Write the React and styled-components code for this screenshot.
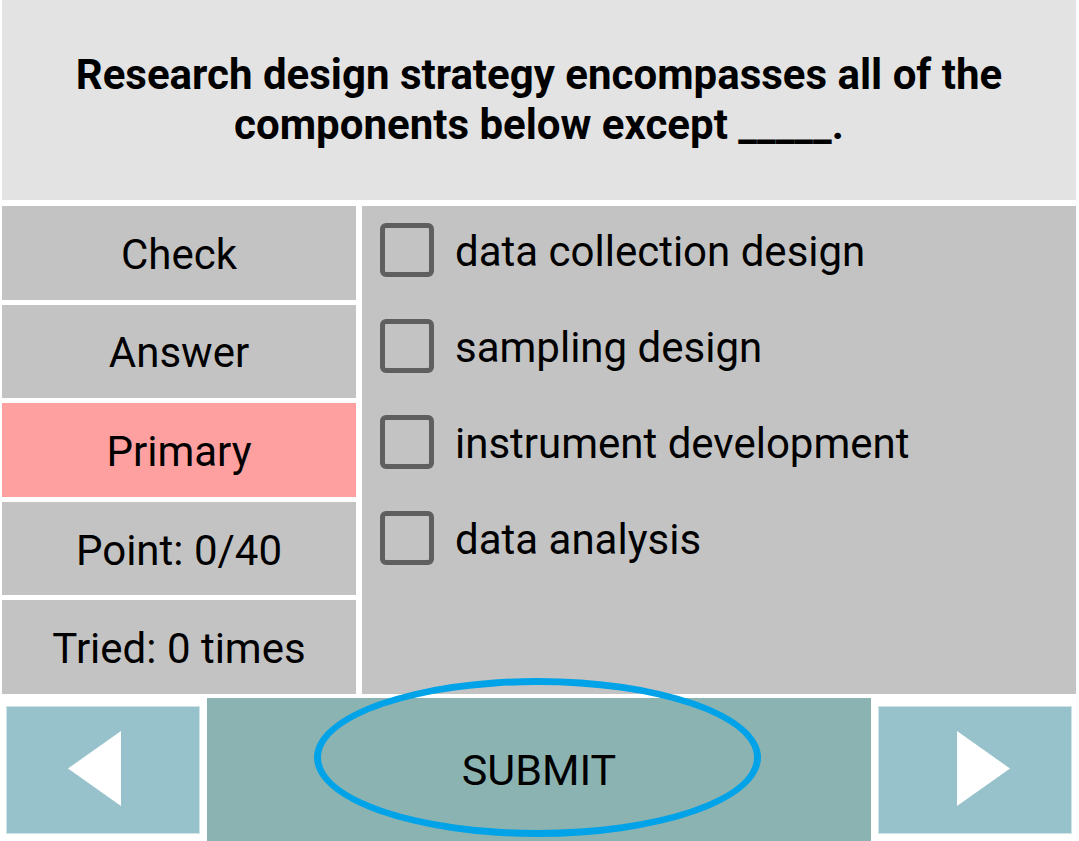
import React from "react";
import styled, { createGlobalStyle } from "styled-components";

const GlobalStyle = createGlobalStyle`
  html, body {
    margin: 0;
    padding: 0;
    background: #ffffff;
    overflow: hidden;
  }
  body {
    font-family: Roboto, "Liberation Sans", Arial, sans-serif;
    color: #000;
  }
`;

const Page = styled.div`
  width: 1079px;
  box-sizing: border-box;
  padding: 0 3px 0 2px;
  display: flex;
  flex-direction: column;
`;

const Header = styled.div`
  height: 200px;
  background: #e3e3e3;
  display: flex;
  align-items: center;
  justify-content: center;
  text-align: center;
`;

const Question = styled.h1`
  margin: 0;
  font-size: 42px;
  font-weight: 700;
  line-height: 50px;
  padding: 0 20px;
`;

const Middle = styled.div`
  margin-top: 6px;
  height: 488px;
  display: flex;
  gap: 6px;
`;

const SideColumn = styled.div`
  width: 354px;
  display: flex;
  flex-direction: column;
  gap: 5px;
`;

const SideRow = styled.div`
  flex: 1;
  background: ${p => (p.$active ? "#ffa0a0" : "#c3c3c3")};
  display: flex;
  align-items: center;
  justify-content: center;
  padding-top: 3px;
  font-size: 42px;
`;

const Options = styled.div`
  flex: 1;
  background: #c3c3c3;
  padding: 6px 0 0 18px;
  display: flex;
  flex-direction: column;
  gap: 20px;
`;

const Option = styled.label`
  height: 76px;
  display: flex;
  align-items: center;
  gap: 21px;
  font-size: 42px;
  cursor: pointer;
`;

const OptionText = styled.span`
  padding-top: 3px;
`;

const Box = styled.span`
  width: 54px;
  height: 54px;
  box-sizing: border-box;
  border: 5px solid #5f5f5f;
  border-radius: 6px;
  flex-shrink: 0;
`;

const Bottom = styled.div`
  margin-top: 4px;
  display: flex;
  align-items: flex-start;
  gap: 7px;
  padding: 0 4px;
`;

const NavButton = styled.button`
  width: 194px;
  height: 128px;
  margin-top: 8px;
  border: 1px solid #cfe2e6;
  box-sizing: border-box;
  background: #98c2cb;
  display: flex;
  align-items: center;
  justify-content: center;
  padding: 0 0 4px;
  cursor: pointer;
`;

const SubmitButton = styled.button`
  position: relative;
  flex: 1;
  height: 144px;
  border: none;
  background: #8ab3b2;
  font-family: Roboto, "Liberation Sans", Arial, sans-serif;
  font-size: 43px;
  color: #000;
  padding: 0;
  cursor: pointer;
`;

const Ring = styled.span`
  position: absolute;
  left: 107px;
  top: -20px;
  width: 447px;
  height: 159px;
  box-sizing: border-box;
  border: 7px solid #00a3e8;
  border-radius: 50%;
  pointer-events: none;
`;

const options = [
  "data collection design",
  "sampling design",
  "instrument development",
  "data analysis"
];

const Arrow = ({ dir }) => (
  <svg width="106" height="75" viewBox="0 0 106 75">
    <polygon
      fill="#fff"
      points={dir === "left" ? "71,0 71,75 18,37.5" : "35,0 35,75 88,37.5"}
    />
  </svg>
);

const App = () => {
  return (
    <Page>
      <GlobalStyle />
      <Header>
        <Question>
          Research design strategy encompasses all of the components below
          except _____.
        </Question>
      </Header>
      <Middle>
        <SideColumn>
          <SideRow>Check</SideRow>
          <SideRow>Answer</SideRow>
          <SideRow $active>Primary</SideRow>
          <SideRow>Point: 0/40</SideRow>
          <SideRow>Tried: 0 times</SideRow>
        </SideColumn>
        <Options>
          {options.map(o => (
            <Option key={o}>
              <Box />
              <OptionText>{o}</OptionText>
            </Option>
          ))}
        </Options>
      </Middle>
      <Bottom>
        <NavButton aria-label="previous">
          <Arrow dir="left" />
        </NavButton>
        <SubmitButton>
          <Ring />
          SUBMIT
        </SubmitButton>
        <NavButton aria-label="next">
          <Arrow dir="right" />
        </NavButton>
      </Bottom>
    </Page>
  );
};

export default App;
